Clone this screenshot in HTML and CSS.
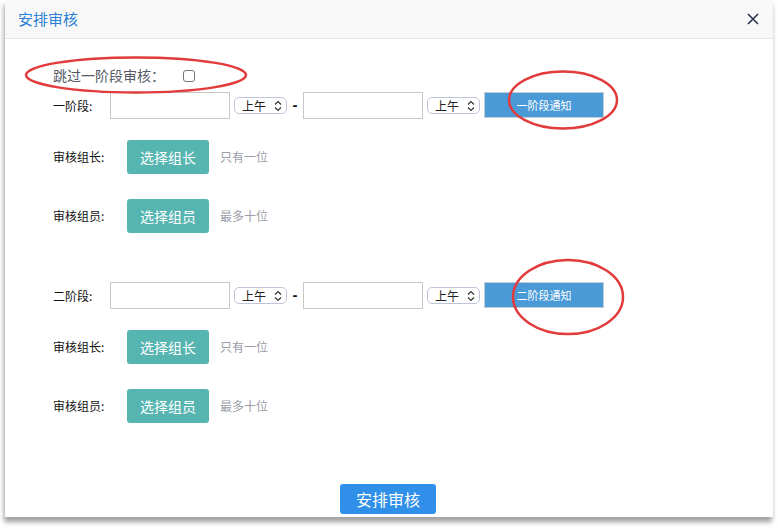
FILE: index.html
```html
<!DOCTYPE html>
<html lang="zh">
<head>
<meta charset="utf-8">
<link rel="stylesheet" href="styles.css">
</head>
<body>
<div class="dialog">
  <div class="header">
    <span class="title">安排审核</span>
    <svg class="close" width="12" height="12" viewBox="0 0 12 12"><path d="M1 1L11 11M11 1L1 11" stroke="#2c3450" stroke-width="1.6" fill="none"/></svg>
  </div>
  <div class="content">
    <div class="skip-row">
      <span class="skip-label">跳过一阶段审核：</span>
      <span class="checkbox"></span>
    </div>

    <div class="stage-row first">
      <span class="label stage-label">一阶段:</span>
      <span class="input"></span>
      <span class="select">上午<svg width="8" height="12" viewBox="0 0 8 12"><path d="M1 4.5L4 1.5L7 4.5M1 7.5L4 10.5L7 7.5" stroke="#333" stroke-width="1.2" fill="none"/></svg></span>
      <span class="dash">-</span>
      <span class="input"></span>
      <span class="select">上午<svg width="8" height="12" viewBox="0 0 8 12"><path d="M1 4.5L4 1.5L7 4.5M1 7.5L4 10.5L7 7.5" stroke="#333" stroke-width="1.2" fill="none"/></svg></span>
      <span class="notify">一阶段通知</span>
    </div>
    <div class="pick-row leader">
      <span class="label pick-label">审核组长:</span>
      <span class="pick-btn">选择组长</span>
      <span class="hint">只有一位</span>
    </div>
    <div class="pick-row member">
      <span class="label pick-label">审核组员:</span>
      <span class="pick-btn">选择组员</span>
      <span class="hint">最多十位</span>
    </div>

    <div class="stage-row second">
      <span class="label stage-label">二阶段:</span>
      <span class="input"></span>
      <span class="select">上午<svg width="8" height="12" viewBox="0 0 8 12"><path d="M1 4.5L4 1.5L7 4.5M1 7.5L4 10.5L7 7.5" stroke="#333" stroke-width="1.2" fill="none"/></svg></span>
      <span class="dash">-</span>
      <span class="input"></span>
      <span class="select">上午<svg width="8" height="12" viewBox="0 0 8 12"><path d="M1 4.5L4 1.5L7 4.5M1 7.5L4 10.5L7 7.5" stroke="#333" stroke-width="1.2" fill="none"/></svg></span>
      <span class="notify">二阶段通知</span>
    </div>
    <div class="pick-row leader">
      <span class="label pick-label">审核组长:</span>
      <span class="pick-btn">选择组长</span>
      <span class="hint">只有一位</span>
    </div>
    <div class="pick-row member">
      <span class="label pick-label">审核组员:</span>
      <span class="pick-btn">选择组员</span>
      <span class="hint">最多十位</span>
    </div>
  </div>
  <div class="footer">
    <span class="submit">安排审核</span>
  </div>
  <svg class="marks" width="768" height="517" viewBox="0 0 768 517">
    <ellipse cx="131" cy="75" rx="110" ry="17.5" fill="none" stroke="#e23b3b" stroke-width="2.5"/>
    <ellipse cx="558" cy="100" rx="54" ry="28.5" fill="none" stroke="#e23b3b" stroke-width="2.5"/>
    <ellipse cx="563" cy="297" rx="55" ry="37" fill="none" stroke="#e23b3b" stroke-width="2.5"/>
  </svg>
</div>
</body>
</html>
```
FILE: styles.css
```css
html, body {
  margin: 0;
  padding: 0;
  background: #ffffff;
}
body {
  font-family: "Noto Sans CJK SC", "Noto Sans", sans-serif;
  min-height: 529px;
}
.dialog {
  position: relative;
  margin-left: 5px;
  width: 768px;
  height: 517px;
  background: #ffffff;
  box-shadow: -1px 5px 5px rgba(0, 0, 0, 0.38);
  display: flex;
  flex-direction: column;
}
.header {
  height: 38px;
  background: #f8f8f8;
  border-bottom: 1px solid #e6e6e6;
  display: flex;
  align-items: center;
  justify-content: space-between;
  padding: 0 14px 0 13px;
}
.title {
  font-size: 15px;
  color: #2a7fd6;
  line-height: 20px;
}
.close {
  display: block;
}
.content {
  padding-left: 48px;
  display: flex;
  flex-direction: column;
}
.skip-row {
  margin-top: 26px;
  height: 20px;
  display: flex;
  align-items: center;
}
.skip-label {
  font-size: 14px;
  color: #555a66;
  line-height: 20px;
}
.checkbox {
  margin-left: 18px;
  width: 10px;
  height: 10px;
  border: 1px solid #767676;
  border-radius: 3px;
  margin-top: 1px;
}
.label {
  font-size: 12px;
  color: #111;
  line-height: 16px;
}
.stage-row {
  height: 27px;
  display: flex;
  align-items: center;
}
.stage-row.first {
  margin-top: 7px;
}
.stage-row.second {
  margin-top: 49px;
}
.stage-label {
  width: 57px;
}
.input {
  box-sizing: border-box;
  width: 120px;
  height: 27px;
  border: 1px solid #c8c8c8;
  background: #fff;
}
.select {
  box-sizing: border-box;
  width: 53px;
  height: 17px;
  margin-left: 4px;
  border: 1px solid #bfc6dc;
  border-radius: 5px;
  background: #fff;
  display: flex;
  align-items: center;
  justify-content: space-between;
  padding: 0 4px 0 7px;
  font-size: 12px;
  color: #222;
  line-height: 15px;
}
.select svg {
  display: block;
}
.dash {
  width: 16px;
  text-align: center;
  font-family: "Liberation Sans", sans-serif;
  font-size: 15px;
  font-weight: 900;
  color: #111;
  line-height: 16px;
  margin-top: -2px;
}
.notify {
  box-sizing: border-box;
  margin-left: 4px;
  width: 120px;
  height: 26px;
  margin-top: -1px;
  background: #4a9ad8;
  border: 1px solid #c3cbd6;
  color: #fff;
  font-size: 11px;
  display: flex;
  align-items: center;
  justify-content: center;
}
.pick-row {
  height: 34px;
  display: flex;
  align-items: center;
}
.pick-row.leader {
  margin-top: 21px;
}
.pick-row.member {
  margin-top: 25px;
}
.pick-label {
  width: 74px;
}
.pick-btn {
  width: 82px;
  height: 34px;
  border-radius: 3px;
  background: #56b5b1;
  color: #fff;
  font-size: 14px;
  display: flex;
  align-items: center;
  justify-content: center;
}
.hint {
  margin-left: 11px;
  font-size: 12px;
  color: #9a9ca8;
  line-height: 16px;
}
.footer {
  margin-top: 61px;
  display: flex;
  justify-content: center;
}
.submit {
  width: 96px;
  height: 30px;
  border-radius: 3px;
  background: #2f8fe9;
  color: #fff;
  font-size: 16px;
  display: flex;
  align-items: center;
  justify-content: center;
  margin-left: -2px;
}
.marks {
  position: absolute;
  left: 0;
  top: 0;
  pointer-events: none;
}
```
